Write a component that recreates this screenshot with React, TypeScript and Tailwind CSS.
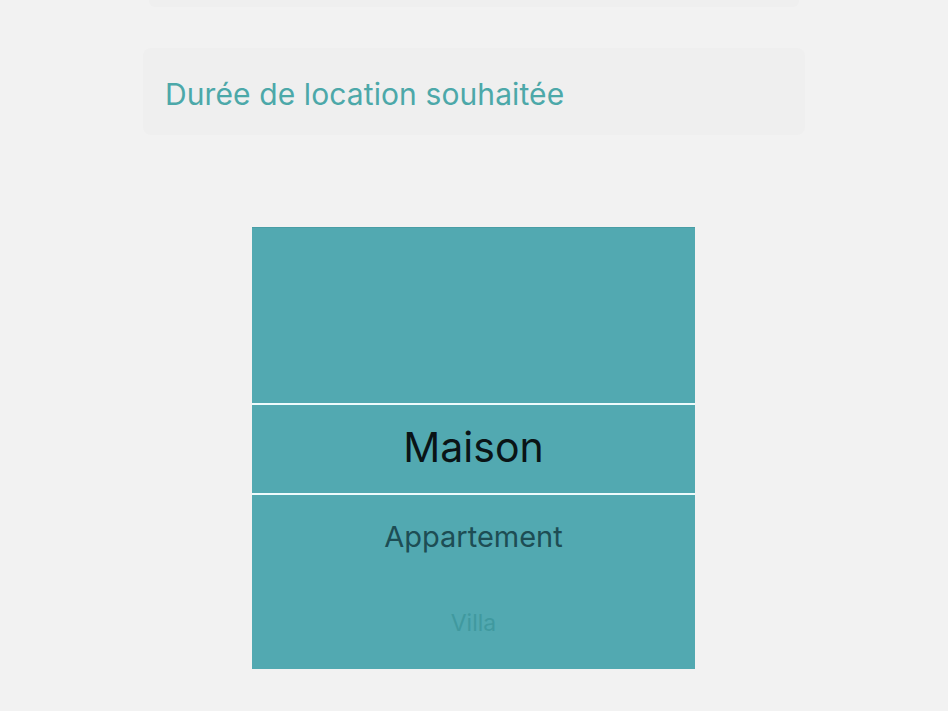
const options = [
  { label: 'Appartement', cls: 'text-[29px] text-[#1d4d54] h-[88px] pt-[27px]' },
  { label: 'Villa', cls: 'text-[23px] text-[#40999f] h-[86px] pt-[29px]' },
]

export default function App() {
  return (
    <div
      className="h-[711px] w-full bg-[#f2f2f2] flex flex-col items-center overflow-hidden"
      style={{ fontFamily: 'Inter, "Noto Sans", sans-serif' }}
    >
      {/* bottom edge of the previous field */}
      <div className="w-[650px] h-[7px] bg-[#efefef] rounded-b-md" />

      {/* Rental duration field */}
      <div className="mt-[41px] w-[662px] h-[87px] bg-[#efefef] rounded-lg flex items-center pl-[22px] pt-[5px]">
        <span className="text-[30px] text-[#4ca8a9] tracking-[0.1px]">Durée de location souhaitée</span>
      </div>

      {/* Property type wheel picker */}
      <div className="mt-[92px] mr-px w-[443px] h-[442px] bg-[#52a9b1] flex flex-col border-t border-[#4a9ea6]">
        <div className="h-[175px]" />
        <div className="h-[2px] bg-[#eefbfc]" />
        <div className="h-[89px] flex items-center justify-center">
          <span className="text-[41px] text-[#0a1416] leading-none pb-[2px]">Maison</span>
        </div>
        <div className="h-[2px] bg-[#eefbfc]" />
        {options.map(o => (
          <div key={o.label} className={`flex justify-center ${o.cls}`}>
            <span className="leading-none">{o.label}</span>
          </div>
        ))}
      </div>
    </div>
  )
}
